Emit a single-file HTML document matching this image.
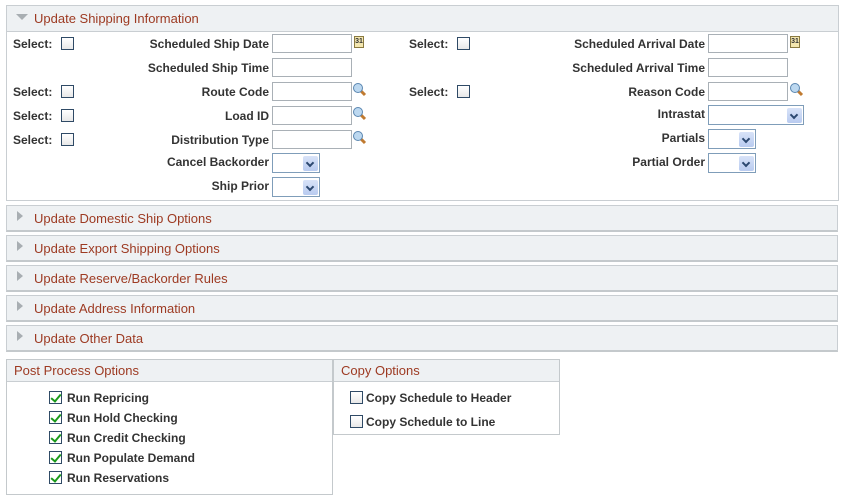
<!DOCTYPE html>
<html><head><style>
*{margin:0;padding:0;box-sizing:border-box}
body{width:845px;height:501px;background:#fff;font-family:"Liberation Sans",Arial,sans-serif;position:relative;overflow:hidden}
.a{position:absolute}
.box{position:absolute;border:1px solid #c9ced2}
.hd{position:absolute;left:0;right:0;top:0;background:#eef1f3;border-bottom:1px solid #c9ced2;color:#9d3a22;font-size:13px}
.bar{position:absolute;left:6px;width:832px;height:27px;background:#eef1f3;border:1px solid #c9ced2;border-bottom:2px solid #c4c9cc}
.bar span{position:absolute;left:27px;top:5px;color:#9d3a22;font-size:13px}
.tri{position:absolute;left:10px;top:5px;width:0;height:0;border-top:5px solid transparent;border-bottom:5px solid transparent;border-left:6px solid #a8aeb2}
.l{position:absolute;font-size:12px;font-weight:bold;color:#333;white-space:nowrap}
.r{text-align:right;width:250px}
.cb{position:absolute;width:13px;height:13px;border:1px solid #2f4a66;background:linear-gradient(#fff,#e8e8e8)}
.in{position:absolute;width:80px;height:19px;border:1px solid #a9b0b6;background:#fff}
.sel{position:absolute;height:20px;border:1px solid #7f9db9;background:#fff}
.sel i{position:absolute;right:1px;top:2px;width:15px;height:15px;background:linear-gradient(#d8e3f8,#b9cbf0);border-radius:2px}
.sel i:after{content:"";position:absolute;left:4px;top:4px;width:4px;height:4px;border-right:2px solid #2c4870;border-bottom:2px solid #2c4870;transform:rotate(45deg)}
.cal{position:absolute;width:10px;height:12px;background:#f4e7b0;border:1px solid #8a7a40;font-size:7px;font-weight:bold;line-height:10px;text-align:center;color:#333}
.mg{position:absolute;width:15px;height:15px}
.ck{position:absolute;width:13px;height:13px;border:1px solid #2f4a66;background:#fff}
.ck:after{content:"";position:absolute;left:3px;top:0px;width:4px;height:8px;border-right:2px solid #1a9a1a;border-bottom:2px solid #1a9a1a;transform:rotate(40deg)}
.cl{font-weight:bold;font-size:12px;color:#333;position:absolute;white-space:nowrap}
</style></head><body>
<div class="box" style="left:6px;top:5px;width:833px;height:196px">
 <div class="hd" style="height:26px"><div style="position:absolute;left:9px;top:8px;border-left:6px solid transparent;border-right:6px solid transparent;border-top:6px solid #a8aeb2"></div><span style="position:absolute;left:27px;top:5px">Update Shipping Information</span></div>
</div>
<!-- left column -->
<div class="l" style="left:13px;top:37px">Select:</div><div class="cb" style="left:61px;top:37px"></div>
<div class="l" style="left:13px;top:85px">Select:</div><div class="cb" style="left:61px;top:85px"></div>
<div class="l" style="left:13px;top:109px">Select:</div><div class="cb" style="left:61px;top:109px"></div>
<div class="l" style="left:13px;top:133px">Select:</div><div class="cb" style="left:61px;top:133px"></div>
<div class="l r" style="left:19px;top:37px">Scheduled Ship Date</div>
<div class="l r" style="left:19px;top:61px">Scheduled Ship Time</div>
<div class="l r" style="left:19px;top:85px">Route Code</div>
<div class="l r" style="left:19px;top:109px">Load ID</div>
<div class="l r" style="left:19px;top:133px">Distribution Type</div>
<div class="l r" style="left:19px;top:155px">Cancel Backorder</div>
<div class="l r" style="left:19px;top:179px">Ship Prior</div>
<div class="in" style="left:272px;top:34px"></div><div class="cal" style="left:354px;top:36px">31</div>
<div class="in" style="left:272px;top:58px"></div>
<div class="in" style="left:272px;top:82px"></div>
<div class="in" style="left:272px;top:106px"></div>
<div class="in" style="left:272px;top:130px"></div>
<div class="sel" style="left:272px;top:153px;width:48px"><i></i></div>
<div class="sel" style="left:272px;top:177px;width:48px"><i></i></div>
<!-- right column -->
<div class="l" style="left:409px;top:37px">Select:</div><div class="cb" style="left:457px;top:37px"></div>
<div class="l" style="left:409px;top:85px">Select:</div><div class="cb" style="left:457px;top:85px"></div>
<div class="l r" style="left:455px;top:37px">Scheduled Arrival Date</div>
<div class="l r" style="left:455px;top:61px">Scheduled Arrival Time</div>
<div class="l r" style="left:455px;top:85px">Reason Code</div>
<div class="l r" style="left:455px;top:107px">Intrastat</div>
<div class="l r" style="left:455px;top:131px">Partials</div>
<div class="l r" style="left:455px;top:155px">Partial Order</div>
<div class="in" style="left:708px;top:34px"></div><div class="cal" style="left:790px;top:36px">31</div>
<div class="in" style="left:708px;top:58px"></div>
<div class="in" style="left:708px;top:82px"></div>
<div class="sel" style="left:708px;top:105px;width:96px"><i></i></div>
<div class="sel" style="left:708px;top:129px;width:48px"><i></i></div>
<div class="sel" style="left:708px;top:153px;width:48px"><i></i></div>
<!-- magnifiers -->
<svg class="mg" style="left:352px;top:82px" viewBox="0 0 15 15"><line x1="8" y1="8" x2="13" y2="13" stroke="#c07a30" stroke-width="3"/><circle cx="6" cy="6" r="4.5" fill="#bcd8f0" stroke="#5a86b0"/></svg>
<svg class="mg" style="left:352px;top:106px" viewBox="0 0 15 15"><line x1="8" y1="8" x2="13" y2="13" stroke="#c07a30" stroke-width="3"/><circle cx="6" cy="6" r="4.5" fill="#bcd8f0" stroke="#5a86b0"/></svg>
<svg class="mg" style="left:352px;top:130px" viewBox="0 0 15 15"><line x1="8" y1="8" x2="13" y2="13" stroke="#c07a30" stroke-width="3"/><circle cx="6" cy="6" r="4.5" fill="#bcd8f0" stroke="#5a86b0"/></svg>
<svg class="mg" style="left:789px;top:82px" viewBox="0 0 15 15"><line x1="8" y1="8" x2="13" y2="13" stroke="#c07a30" stroke-width="3"/><circle cx="6" cy="6" r="4.5" fill="#bcd8f0" stroke="#5a86b0"/></svg>
<!-- collapsed bars -->
<div class="bar" style="top:205px"><div class="tri"></div><span>Update Domestic Ship Options</span></div>
<div class="bar" style="top:235px"><div class="tri"></div><span>Update Export Shipping Options</span></div>
<div class="bar" style="top:265px"><div class="tri"></div><span>Update Reserve/Backorder Rules</span></div>
<div class="bar" style="top:295px"><div class="tri"></div><span>Update Address Information</span></div>
<div class="bar" style="top:325px"><div class="tri"></div><span>Update Other Data</span></div>
<!-- post process -->
<div class="box" style="left:6px;top:359px;width:327px;height:136px;border-color:#c4c9cc"><div class="hd" style="height:22px"><span style="position:absolute;left:7px;top:3px">Post Process Options</span></div></div>
<div class="ck" style="left:49px;top:391px"></div><div class="cl" style="left:67px;top:391px">Run Repricing</div>
<div class="ck" style="left:49px;top:411px"></div><div class="cl" style="left:67px;top:411px">Run Hold Checking</div>
<div class="ck" style="left:49px;top:431px"></div><div class="cl" style="left:67px;top:431px">Run Credit Checking</div>
<div class="ck" style="left:49px;top:451px"></div><div class="cl" style="left:67px;top:451px">Run Populate Demand</div>
<div class="ck" style="left:49px;top:471px"></div><div class="cl" style="left:67px;top:471px">Run Reservations</div>
<!-- copy options -->
<div class="box" style="left:333px;top:359px;width:227px;height:76px;border-color:#c4c9cc"><div class="hd" style="height:22px"><span style="position:absolute;left:7px;top:3px">Copy Options</span></div></div>
<div class="cb" style="left:350px;top:391px"></div><div class="cl" style="left:366px;top:391px">Copy Schedule to Header</div>
<div class="cb" style="left:350px;top:415px"></div><div class="cl" style="left:366px;top:415px">Copy Schedule to Line</div>
</body></html>
